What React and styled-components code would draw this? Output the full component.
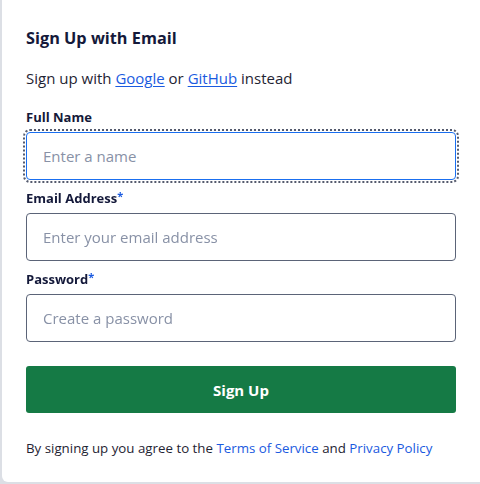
import React from "react";
import styled, { createGlobalStyle, css } from "styled-components";

const Global = createGlobalStyle`
  html, body { margin: 0; padding: 0; }
  body {
    background: #dcdfe5;
    font-family: "Open Sans", "Liberation Sans", sans-serif;
    overflow: hidden;
  }
`;

const Page = styled.div`
  width: 480px;
  height: 484px;
  padding-left: 2px;
  box-sizing: border-box;
  overflow: hidden;
`;

const Card = styled.div`
  margin-top: -10px;
  height: 492px;
  width: 490px;
  background: #ffffff;
  border-radius: 6px;
  box-sizing: border-box;
  padding: 37px 0 0 24px;
  display: flex;
  flex-direction: column;
`;

const Content = styled.div`
  width: 430px;
  display: flex;
  flex-direction: column;
`;

const Title = styled.h2`
  margin: 0;
  font-size: 16.3px;
  font-weight: 700;
  color: #14193a;
  line-height: 22px;
`;

const Alt = styled.p`
  margin: 18px 0 0;
  font-size: 15px;
  color: #1f2433;
  line-height: 22px;
`;

const Link = styled.a`
  color: #1a5ae0;
  text-decoration: ${(p) => (p.$underline ? "underline" : "none")};
  text-underline-offset: 2px;
`;

const Field = styled.div`
  display: flex;
  flex-direction: column;
  margin-top: ${(p) => p.$gap}px;
`;

const Label = styled.label`
  font-size: 13px;
  font-weight: 700;
  color: #14193a;
  line-height: 18px;
  height: 18px;
  margin-bottom: 6px;
`;

const Req = styled.span`
  color: #1a5ae0;
  font-size: 11px;
  vertical-align: top;
  line-height: 14px;
`;

const Input = styled.input`
  box-sizing: border-box;
  width: 430px;
  height: 48px;
  border: 1px solid #5b6478;
  border-radius: 4px;
  padding: 0 16px;
  font-family: inherit;
  font-size: 15px;
  color: #1f2433;
  background: #fff;
  outline: none;
  &::placeholder { color: #8891a6; }
  ${(p) =>
    p.$focused &&
    css`
      border-color: #1a6ff0;
      outline: 2px dotted #555b6e;
      outline-offset: 1px;
    `}
  &:focus {
    border-color: #1a6ff0;
    outline: 2px dotted #555b6e;
    outline-offset: 1px;
  }
`;

const Button = styled.button`
  margin-top: 24px;
  width: 430px;
  height: 47px;
  border: none;
  border-radius: 3px;
  background: #157a45;
  color: #ffffff;
  font-family: inherit;
  font-size: 15px;
  font-weight: 700;
  cursor: pointer;
`;

const Terms = styled.p`
  margin: 25px 0 0;
  font-size: 13.3px;
  color: #1f2433;
  line-height: 20px;
`;

export default function App() {
  return (
    <>
      <Global />
      <Page>
        <Card>
          <Content>
            <Title>Sign Up with Email</Title>
            <Alt>
              Sign up with <Link href="#" $underline>Google</Link> or{" "}
              <Link href="#" $underline>GitHub</Link> instead
            </Alt>
            <Field $gap={19}>
              <Label>Full Name</Label>
              <Input $focused placeholder="Enter a name" autoFocus />
            </Field>
            <Field $gap={9}>
              <Label>
                Email Address<Req>*</Req>
              </Label>
              <Input placeholder="Enter your email address" />
            </Field>
            <Field $gap={9}>
              <Label>
                Password<Req>*</Req>
              </Label>
              <Input type="password" placeholder="Create a password" />
            </Field>
            <Button>Sign Up</Button>
            <Terms>
              By signing up you agree to the <Link href="#">Terms of Service</Link> and{" "}
              <Link href="#">Privacy Policy</Link>
            </Terms>
          </Content>
        </Card>
      </Page>
    </>
  );
}
